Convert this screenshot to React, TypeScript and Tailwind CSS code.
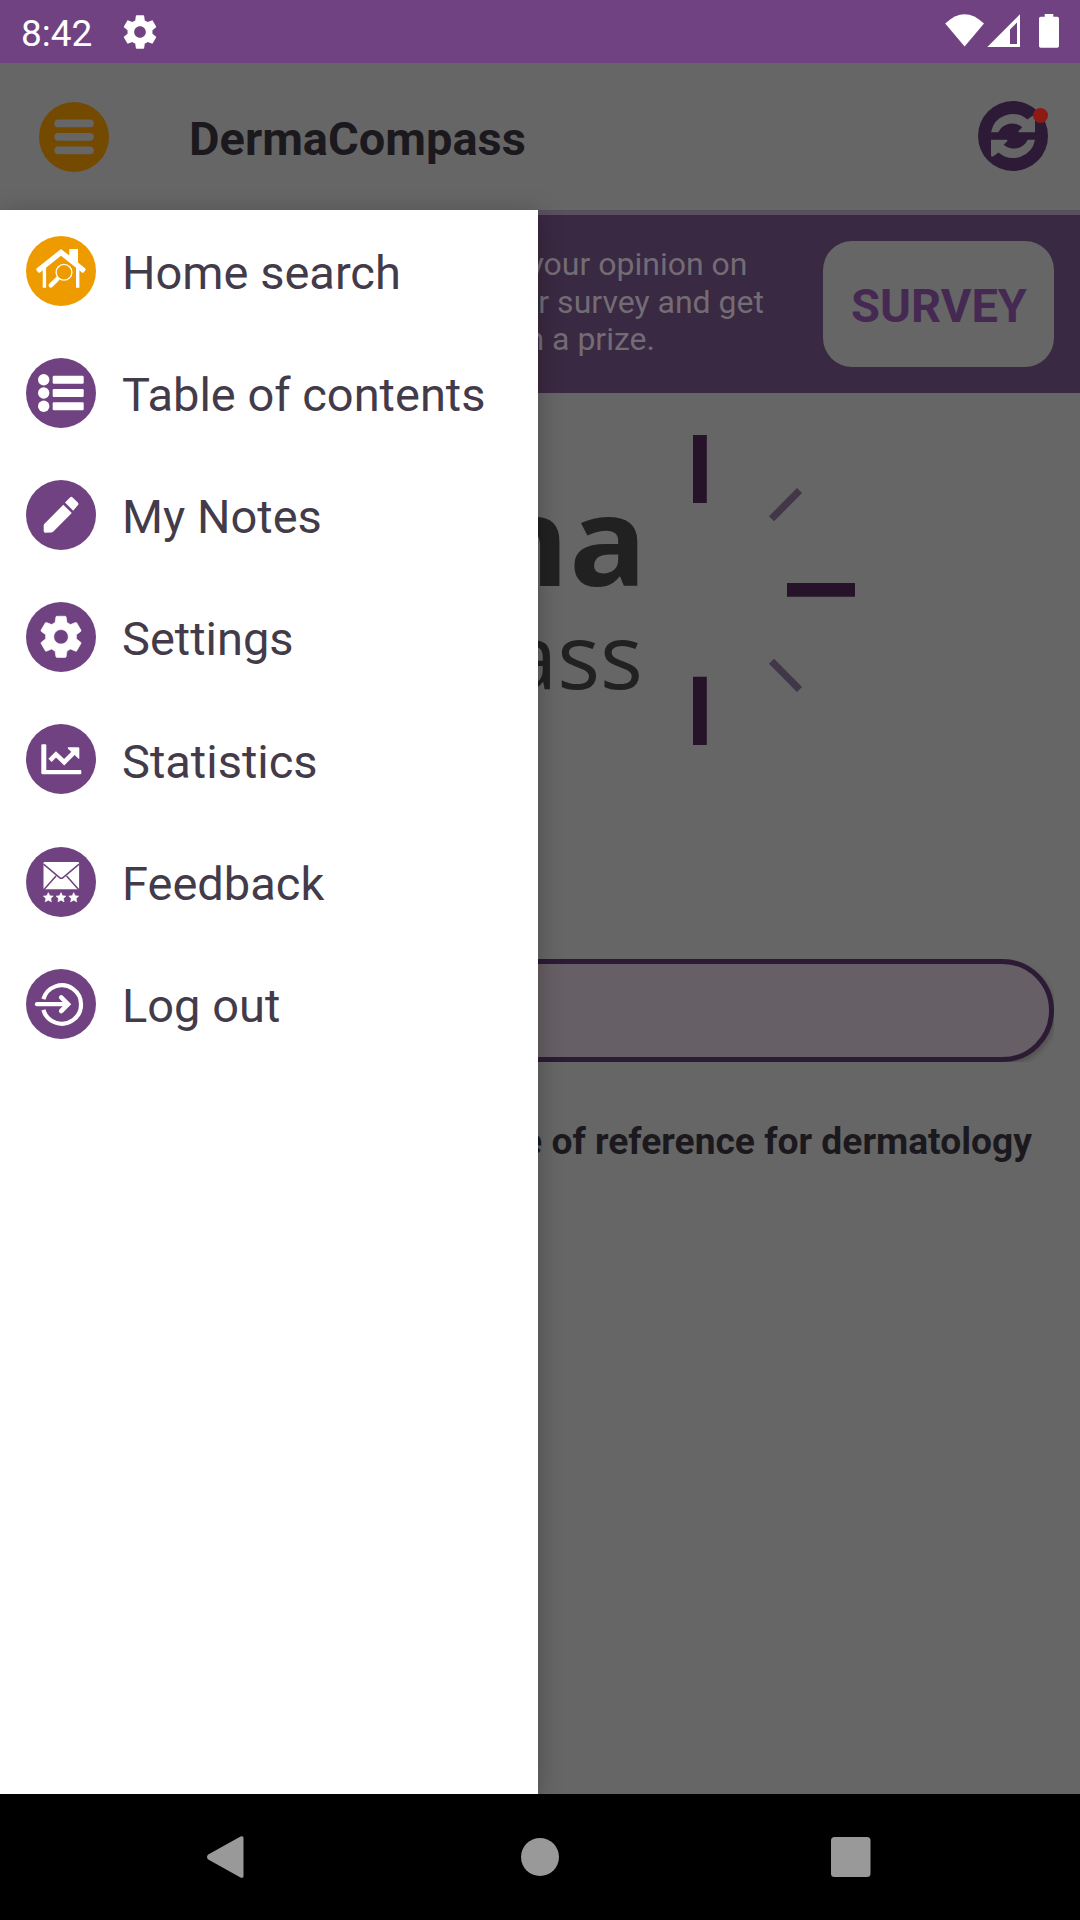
import type { ReactNode } from "react";

const GEAR =
  "M19.43 12.98c.04-.32.07-.64.07-.98s-.03-.66-.07-.98l2.11-1.65c.19-.15.24-.42.12-.64l-2-3.46c-.12-.22-.39-.3-.61-.22l-2.49 1c-.52-.4-1.08-.73-1.69-.98l-.38-2.65C14.46 2.18 14.25 2 14 2h-4c-.25 0-.46.18-.49.42l-.38 2.65c-.61.25-1.17.59-1.69.98l-2.49-1c-.23-.09-.49 0-.61.22l-2 3.46c-.13.22-.07.49.12.64l2.11 1.65c-.04.32-.07.65-.07.98s.03.66.07.98l-2.11 1.65c-.19.15-.24.42-.12.64l2 3.46c.12.22.39.3.61.22l2.49-1c.52.4 1.08.73 1.69.98l.38 2.65c.03.24.24.42.49.42h4c.25 0 .46-.18.49-.42l.38-2.65c.61-.25 1.17-.59 1.69-.98l2.49 1c.23.09.49 0 .61-.22l2-3.46c.12-.22.07-.49-.12-.64l-2.11-1.65zM12 15.5c-1.93 0-3.5-1.57-3.5-3.5s1.57-3.5 3.5-3.5 3.5 1.57 3.5 3.5-1.57 3.5-3.5 3.5z";

function Disc({ color = "#704281", children }: { color?: string; children: ReactNode }) {
  return (
    <svg viewBox="0 0 70 70" className="size-[70px] shrink-0" fill="#fff">
      <circle cx="35" cy="35" r="35" fill={color} />
      {children}
    </svg>
  );
}

function HomeIcon() {
  return (
    <Disc color="#ee9b00">
      <path d="M35 13 43.3 19.6V13H52v13.6l7 5.6q1.2 1 .2 2.2l-1.4 1.8q-1 1-2.2 0L35 19.7 14.4 36.2q-1.2 1-2.2 0l-1.6-1.8q-1-1.2.2-2.2z" />
      <path d="M16.7 32.5l3.4-2.7v21.9h-3.4zM50 29.8l3.4 2.7v19.2H50z" />
      <circle cx="38" cy="36.3" r="7.9" fill="none" stroke="#fff" strokeWidth="1.3" />
      <path d="M31.2 43.2 24.8 49.4" stroke="#fff" strokeWidth="4.4" strokeLinecap="round" />
    </Disc>
  );
}

function ContentsIcon() {
  return (
    <Disc>
      {[21.7, 35, 48.3].map((y) => (
        <g key={y}>
          <circle cx="17.7" cy={y} r="5.7" />
          <rect x="26.7" y={y - 4} width="31" height="8" rx="1.2" />
        </g>
      ))}
    </Disc>
  );
}

function NotesIcon() {
  return (
    <Disc>
      <path d="M17.7 51V45.6q0-1 .8-1.8L37.3 24.7l8.5 8.4L27.4 51.6q-.8.8-1.8.8l-6.4.3q-1.5 0-1.5-1.7z" />
      <path d="M39 22.6l5-5.2q1.3-1.3 2.6 0l5.2 5.2q1.3 1.3 0 2.6l-4.6 5.5z" />
    </Disc>
  );
}

function SettingsIcon() {
  return (
    <Disc>
      <path d={GEAR} transform="translate(10.3 10.1) scale(2.06)" stroke="#fff" strokeWidth="0.3" />
    </Disc>
  );
}

function StatisticsIcon() {
  return (
    <Disc>
      <path d="M15.3 21.3q0-1 1-1h3q1 0 1 1V46H54.3q1 0 1 1v2.3q0 1-1 1H16.8q-1.5 0-1.5-1.5z" />
      <path d="M24 36.4l6-6 8.2 7.8L49 27.4" fill="none" stroke="#fff" strokeWidth="4.6" />
      <path d="M41.7 23.8q0-.6.8-.6h9.6q1.2 0 1.2 1.2v9.8q0 1.2-1 .4L42 24.8z" />
    </Disc>
  );
}

function FeedbackIcon() {
  const star = "M0-5 1.6-1.9 5-1.5 2.5.9 3.1 4.3 0 2.6-3.1 4.3-2.5.9-5-1.5-1.6-1.9z";
  return (
    <Disc>
      <rect x="17.5" y="15" width="35.6" height="27.2" rx="1" />
      <path
        d="M17.5 17.2 33.6 30.6q1.7 1.4 3.4 0L53.1 17.2M18 42.5 30 29M52.6 42.5 40.6 29"
        fill="none"
        stroke="#704281"
        strokeWidth="1.5"
      />
      {[22.3, 35, 47.7].map((x) => (
        <path key={x} d={star} transform={`translate(${x} 50.6)`} stroke="#fff" strokeWidth="0.5" />
      ))}
    </Disc>
  );
}

function LogoutIcon() {
  return (
    <Disc>
      <g fill="none" stroke="#fff" strokeWidth="4.2">
        <path d="M17.4 30.2A19.2 19.2 0 1 1 17.4 40.8" />
        <path d="M11 35.2H41" strokeLinecap="round" />
        <path d="M35.2 28.4 42 35.2 35.2 42" strokeLinecap="round" strokeWidth="4.6" />
      </g>
    </Disc>
  );
}

const menu = [
  { label: "Home search", icon: <HomeIcon /> },
  { label: "Table of contents", icon: <ContentsIcon /> },
  { label: "My Notes", icon: <NotesIcon /> },
  { label: "Settings", icon: <SettingsIcon /> },
  { label: "Statistics", icon: <StatisticsIcon /> },
  { label: "Feedback", icon: <FeedbackIcon /> },
  { label: "Log out", icon: <LogoutIcon /> },
];

function StatusBar() {
  return (
    <div className="flex h-[63px] items-center justify-between bg-[#704281] px-[21px] text-white">
      <div className="flex items-center">
        <span className="w-[99px] pt-[3px] text-[37px] leading-[63px]">8:42</span>
        <svg viewBox="0 0 24 24" className="size-[40px]" fill="#fff">
          <path d={GEAR} />
        </svg>
      </div>
      <svg viewBox="945 0 114 63" className="h-[63px] w-[114px]" fill="#fff">
        <path d="M945.2 23.5Q964.6 5 984 23.5L964.6 46.5z" />
        <path fillRule="evenodd" d="M987.3 47 1020 14.3V47zM1010 29.5V44H1017V22.5z" />
        <path d="M1044.7 14h8.6v2.7h4q1.7 0 1.7 1.7V46q0 1.8-1.7 1.8H1040.7q-1.7 0-1.7-1.8V18.4q0-1.7 1.7-1.7h4z" />
      </svg>
    </div>
  );
}

function Header() {
  return (
    <header className="flex h-[147px] items-center bg-[#666] pl-[39px] pr-[32px]">
      <svg viewBox="0 0 70 70" className="size-[70px]" fill="#666">
        <circle cx="35" cy="35" r="35" fill="#734a00" />
        {[17.5, 30.9, 44.4].map((y) => (
          <rect key={y} x="15.3" y={y} width="39.5" height="7.8" rx="3.9" />
        ))}
      </svg>
      <h1 className="ml-[80px] flex-1 pt-[5px] text-[47px] font-bold text-[#1c191e]">DermaCompass</h1>
      <div className="relative -mt-[2px]">
        <svg viewBox="0 0 70 70" className="size-[70px]" fill="#666">
          <circle cx="35" cy="35" r="35" fill="#2d1a36" />
          <path
            id="arrow"
            d="M13 31.3A22.2 22.2 0 0 1 49.5 18.6L54.6 14.8Q57 13.4 57 16V31.3H41.5Q39.6 31.2 41 29.6L44.3 26.2A15.3 15.3 0 0 0 20.3 31.3z"
          />
          <use href="#arrow" transform="rotate(180 35 35)" />
        </svg>
        <span className="absolute left-[55px] top-[7px] size-[15px] rounded-full bg-[#8e1a14]" />
      </div>
    </header>
  );
}

function Banner() {
  return (
    <section className="flex h-[183px] items-center justify-end border-t-[5px] border-[#5a4f5e] bg-[#3a2942] pr-[26px]">
      <p className="-mt-[3px] w-[290px] whitespace-nowrap text-right text-[32px] leading-[37.7px] text-[#736c75]">
        <span className="mr-[16.5px] block">your opinion on</span>
        <span className="block">our survey and get</span>
        <span className="mr-[109px] block">win a prize.</span>
      </p>
      <button className="ml-[59px] h-[126px] w-[231px] rounded-[29px] bg-[#666] pl-px pt-[4px] text-[47px] font-bold text-[#452952]">
        SURVEY
      </button>
    </section>
  );
}

function Hero() {
  return (
    <section className="flex h-[566px] pt-[40px] font-['Open_Sans',sans-serif] text-[#212121]">
      <div className="w-[640px] text-right">
        <div className="mr-[-7px] mt-[46px] origin-right scale-x-105 text-[123px] font-bold leading-[120px]">
          ma
        </div>
        <div className="mr-[-3px] mt-[5px] text-[90px] leading-[100px]">ass</div>
      </div>
      <svg viewBox="690 433 170 316" className="ml-[50px] h-[316px] w-[170px]">
        <path d="M699.9 435V503M699.9 676.8V745M787 589.9H855" stroke="#261329" strokeWidth="13.8" />
        <path
          d="M771.5 518.8 799.5 490.5M771.5 661.2 799.5 689.5"
          stroke="#423748"
          strokeWidth="7.2"
        />
      </svg>
    </section>
  );
}

function Drawer() {
  return (
    <nav className="absolute left-0 top-[210px] h-[1584px] w-[538px] bg-white shadow-[0_4px_24px_rgba(0,0,0,0.26)]">
      {menu.map(({ label, icon }) => (
        <a key={label} className="flex h-[122.2px] items-center gap-[26px] pb-px pl-[26px]">
          {icon}
          <span className="whitespace-nowrap pt-[5px] text-[47px] text-[#443b4a]">{label}</span>
        </a>
      ))}
    </nav>
  );
}

export default function App() {
  return (
    <div className="relative flex h-[1920px] w-[1080px] flex-col overflow-hidden bg-[#666] font-[Roboto,sans-serif]">
      <StatusBar />
      <Header />
      <Banner />
      <Hero />
      <div className="mx-[26px] h-[103px] overflow-hidden">
        <div className="h-full rounded-full border-[5px] border-[#2d1a35] bg-[#665f65] shadow-[2px_3px_5px_rgba(0,0,0,0.2)]" />
      </div>
      <p className="mt-[52px] whitespace-nowrap pr-[48px] text-right text-[37.2px] font-bold text-[#1c191e]">
        source of reference for dermatology
      </p>
      <Drawer />
      <footer className="relative mt-auto h-[126px] bg-black">
        <svg viewBox="0 0 1080 126" className="h-full w-full" fill="#999">
          <path d="M207.8 60.7 240.5 42.6q3-1.4 3 1.4V82q0 2.8-3 1.4L207.8 65.3q-1.8-2.3 0-4.6z" />
          <circle cx="540" cy="63" r="19" />
          <rect x="831" y="43" width="39.5" height="40" rx="3.5" />
        </svg>
      </footer>
    </div>
  );
}
